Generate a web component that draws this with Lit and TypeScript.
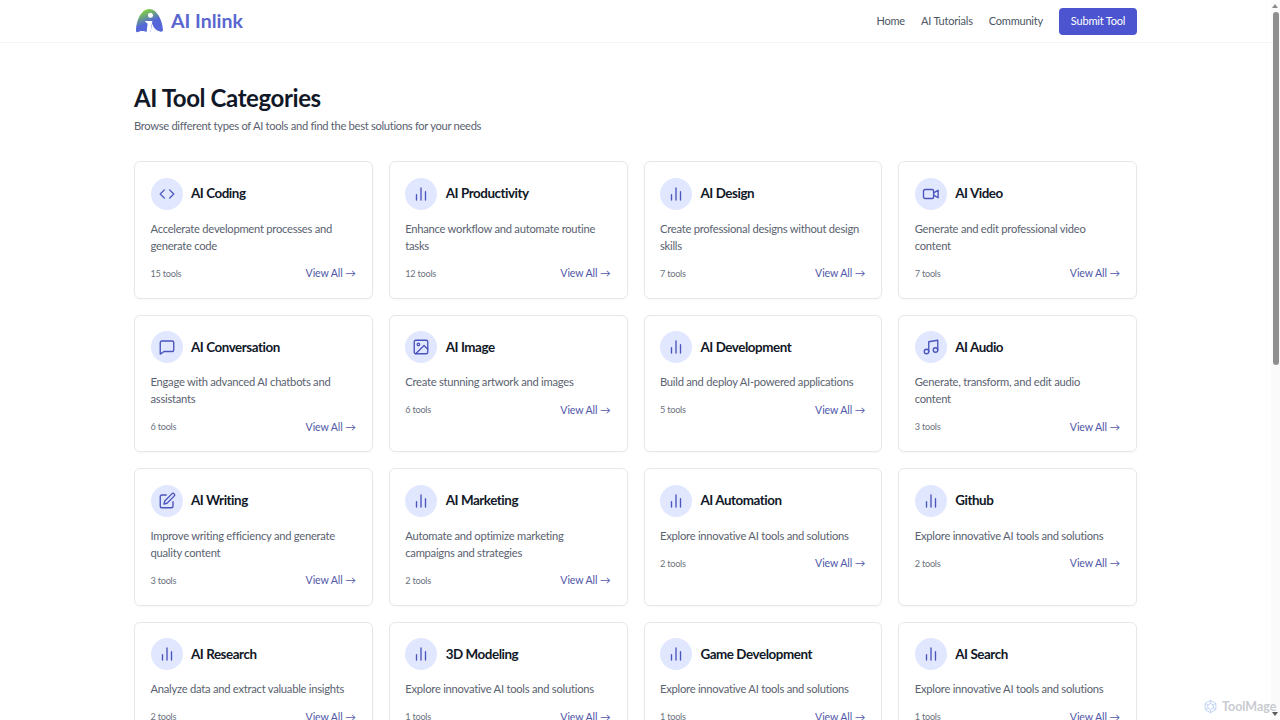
import { LitElement, html, css, svg } from "lit";
import { customElement } from "lit/decorators.js";

const BARS = svg`<path d="M12 20V4M18 20V9M6 20v-7" />`;
const ICONS: Record<string, unknown> = {
  code: svg`<path d="M8.5 6.5L3 12l5.5 5.5M15.5 6.5L21 12l-5.5 5.5" />`,
  bars: BARS,
  video: svg`<rect x="2" y="6" width="13.5" height="12" rx="2" /><path d="M15.5 10.5l6-3.5v10l-6-3.5" />`,
  chat: svg`<path d="M5 4h14a2 2 0 0 1 2 2v10a2 2 0 0 1-2 2H8l-5 3.5V6a2 2 0 0 1 2-2z" />`,
  image: svg`<rect x="3" y="3" width="18" height="18" rx="2" /><circle cx="8.5" cy="8.5" r="1.6" /><path d="M21 15l-5-5L5 21" />`,
  music: svg`<path d="M9 18V5l12-2v13" /><circle cx="6" cy="18" r="3" /><circle cx="18" cy="16" r="3" />`,
  edit: svg`<path d="M11 4H5a2 2 0 0 0-2 2v13a2 2 0 0 0 2 2h13a2 2 0 0 0 2-2v-6" /><path d="M18.5 2.5a2.1 2.1 0 0 1 3 3L12 15l-4 1 1-4z" />`,
};

type Category = { name: string; desc: string; count: string; icon: string };

const EXPLORE = "Explore innovative AI tools and solutions";

const CATEGORIES: Category[] = [
  { name: "AI Coding", desc: "Accelerate development processes and generate code", count: "15 tools", icon: "code" },
  { name: "AI Productivity", desc: "Enhance workflow and automate routine tasks", count: "12 tools", icon: "bars" },
  { name: "AI Design", desc: "Create professional designs without design skills", count: "7 tools", icon: "bars" },
  { name: "AI Video", desc: "Generate and edit professional video content", count: "7 tools", icon: "video" },
  { name: "AI Conversation", desc: "Engage with advanced AI chatbots and assistants", count: "6 tools", icon: "chat" },
  { name: "AI Image", desc: "Create stunning artwork and images", count: "6 tools", icon: "image" },
  { name: "AI Development", desc: "Build and deploy AI-powered applications", count: "5 tools", icon: "bars" },
  { name: "AI Audio", desc: "Generate, transform, and edit audio content", count: "3 tools", icon: "music" },
  { name: "AI Writing", desc: "Improve writing efficiency and generate quality content", count: "3 tools", icon: "edit" },
  { name: "AI Marketing", desc: "Automate and optimize marketing campaigns and strategies", count: "2 tools", icon: "bars" },
  { name: "AI Automation", desc: EXPLORE, count: "2 tools", icon: "bars" },
  { name: "Github", desc: EXPLORE, count: "2 tools", icon: "bars" },
  { name: "AI Research", desc: "Analyze data and extract valuable insights", count: "2 tools", icon: "bars" },
  { name: "3D Modeling", desc: EXPLORE, count: "1 tools", icon: "bars" },
  { name: "Game Development", desc: EXPLORE, count: "1 tools", icon: "bars" },
  { name: "AI Search", desc: EXPLORE, count: "1 tools", icon: "bars" },
];

@customElement("app-root")
export class AppRoot extends LitElement {
  static styles = css`
    :host {
      display: flex;
      position: relative;
      width: 1280px;
      height: 720px;
      overflow: hidden;
      background: #fff;
      font-family: "Lato", "Noto Sans", sans-serif;
      color: #111827;
    }
    .page {
      flex: 1;
      min-width: 0;
    }
    header {
      height: 42px;
      border-bottom: 1px solid #f3f4f6;
      display: flex;
      justify-content: center;
    }
    .bar {
      width: 1003px;
      display: flex;
      align-items: center;
      justify-content: space-between;
    }
    .brand {
      display: flex;
      align-items: center;
      gap: 7px;
      padding: 0 0 1px 1px;
      font-size: 19.5px;
      font-weight: 700;
      color: #5a67cf;
    }
    .brand svg {
      width: 29px;
      height: 25px;
      display: block;
    }
    nav {
      display: flex;
      align-items: center;
      gap: 16px;
      font-size: 11px;
      letter-spacing: -0.2px;
      color: #4b5563;
    }
    .link {
      padding-bottom: 2px;
    }
    .submit {
      box-sizing: border-box;
      background: #4c55cf;
      color: #fff;
      border-radius: 4px;
      height: 27px;
      width: 78px;
      padding-bottom: 1px;
      display: flex;
      align-items: center;
      justify-content: center;
    }
    main {
      width: 1003px;
      margin: 0 auto;
      padding-top: 40px;
    }
    h1 {
      margin: 0;
      font-size: 24px;
      line-height: 30px;
      font-weight: 700;
      letter-spacing: -0.4px;
      color: #111827;
    }
    .sub {
      margin: 4px 0 0;
      font-size: 11.2px;
      line-height: 17px;
      letter-spacing: -0.31px;
      color: #5a6270;
    }
    .grid {
      margin-top: 27px;
      display: grid;
      grid-template-columns: repeat(4, 1fr);
      grid-auto-rows: 137.5px;
      column-gap: 16px;
      row-gap: 16px;
    }
    .card {
      box-sizing: border-box;
      border: 1px solid #e5e7eb;
      border-radius: 6px;
      padding: 15.5px 16px 0 15.5px;
      box-shadow: 0 1px 2px rgba(0, 0, 0, 0.03);
    }
    .head {
      display: flex;
      align-items: center;
      gap: 8.5px;
    }
    .circle {
      width: 32px;
      height: 32px;
      border-radius: 50%;
      background: #e0e7ff;
      display: flex;
      align-items: center;
      justify-content: center;
      flex: none;
    }
    .circle svg {
      width: 18px;
      height: 18px;
      fill: none;
      stroke: #4c55bd;
      stroke-width: 1.8;
      stroke-linecap: round;
      stroke-linejoin: round;
    }
    .name {
      font-size: 13.4px;
      font-weight: 700;
      letter-spacing: -0.45px;
      padding-bottom: 0.5px;
      color: #111827;
    }
    .desc {
      margin: 10px 0 0;
      max-width: 202px;
      font-size: 11.2px;
      line-height: 17px;
      letter-spacing: -0.25px;
      color: #5a6270;
    }
    .foot {
      margin-top: 11px;
      display: flex;
      justify-content: space-between;
      align-items: center;
      height: 17px;
    }
    .count {
      font-size: 9.2px;
      letter-spacing: -0.25px;
      color: #6b7280;
    }
    .all {
      font-size: 10.6px;
      letter-spacing: -0.1px;
      color: #5058a8;
    }
    .scroll {
      width: 9px;
      flex: none;
      background: #fafafa;
      display: flex;
      flex-direction: column;
      align-items: center;
      position: relative;
    }
    .thumb {
      margin-top: 12px;
      width: 6px;
      height: 353px;
      border-radius: 3px;
      background: #8e8e8e;
    }
    .arrow-up,
    .arrow-down {
      position: absolute;
      left: 1px;
      width: 0;
      height: 0;
      border-left: 3.5px solid transparent;
      border-right: 3.5px solid transparent;
    }
    .arrow-up {
      top: 4px;
      border-bottom: 4px solid #8a8a8a;
    }
    .arrow-down {
      bottom: 4px;
      border-top: 4px solid #5a5a5a;
    }
    .mark {
      position: absolute;
      left: 1203px;
      top: 699px;
      display: flex;
      align-items: center;
      gap: 4px;
      font-size: 12.5px;
      font-weight: 700;
      color: #c9ccd1;
    }
    .mark svg {
      width: 15px;
      height: 15px;
      fill: none;
      stroke: #bcd0f2;
      stroke-width: 1.5;
    }
  `;

  private renderCard(c: Category) {
    return html`
      <div class="card">
        <div class="head">
          <span class="circle"><svg viewBox="0 0 24 24">${ICONS[c.icon]}</svg></span>
          <span class="name">${c.name}</span>
        </div>
        <p class="desc">${c.desc}</p>
        <div class="foot">
          <span class="count">${c.count}</span>
          <span class="all">View All →</span>
        </div>
      </div>
    `;
  }

  render() {
    return html`
      <div class="page">
        <header>
          <div class="bar">
            <div class="brand">
              <svg viewBox="0 0 30 26">
                <defs>
                  <linearGradient id="lg" x1="0.2" y1="0" x2="0.6" y2="0.85">
                    <stop offset="0.1" stop-color="#7dd33a" />
                    <stop offset="0.7" stop-color="#5566d8" />
                  </linearGradient>
                </defs>
                <path
                  d="M1 23.5C1 14 6 1 15 1C23 1 29 14 29 23C29 25 27 25 26 24.5C22 23 19 21 18 16L16 25H12C8 23 5 24 3 25C1.5 25.5 1 25 1 23.5Z"
                  fill="url(#lg)"
                />
                <circle cx="16" cy="7.5" r="2.6" fill="#fff" />
                <path d="M10 13.5h8L16 25h-4l1-8.5z" fill="#fff" />
              </svg>
              AI Inlink
            </div>
            <nav>
              <span class="link">Home</span>
              <span class="link">AI Tutorials</span>
              <span class="link">Community</span>
              <span class="submit">Submit Tool</span>
            </nav>
          </div>
        </header>
        <main>
          <h1>AI Tool Categories</h1>
          <p class="sub">Browse different types of AI tools and find the best solutions for your needs</p>
          <div class="grid">${CATEGORIES.map((c) => this.renderCard(c))}</div>
        </main>
      </div>
      <div class="scroll">
        <span class="arrow-up"></span>
        <div class="thumb"></div>
        <span class="arrow-down"></span>
      </div>
      <div class="mark">
        <svg viewBox="0 0 24 24">
          <path d="M12 2l8.5 5v10L12 22l-8.5-5V7z" />
          <path d="M12 7l4.3 2.5v5L12 17l-4.3-2.5v-5z" />
          <path d="M12 2v5M20.5 7l-4.2 2.5M20.5 17l-4.2-2.5M12 22v-5M3.5 17l4.2-2.5M3.5 7l4.2 2.5" />
        </svg>
        ToolMage
      </div>
    `;
  }
}
